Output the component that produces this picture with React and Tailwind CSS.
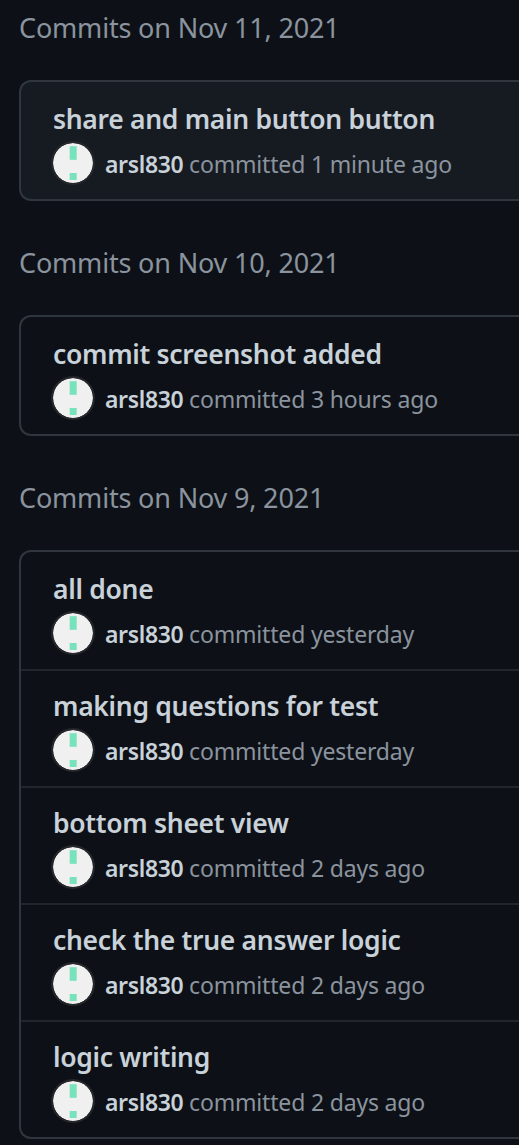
const groups = [
  {
    date: 'Nov 11, 2021',
    highlighted: true,
    commits: [{ title: 'share and main button button', when: '1 minute ago' }],
  },
  {
    date: 'Nov 10, 2021',
    commits: [{ title: 'commit screenshot added', when: '3 hours ago' }],
  },
  {
    date: 'Nov 9, 2021',
    commits: [
      { title: 'all done', when: 'yesterday' },
      { title: 'making questions for test', when: 'yesterday' },
      { title: 'bottom sheet view', when: '2 days ago' },
      { title: 'check the true answer logic', when: '2 days ago' },
      { title: 'logic writing', when: '2 days ago' },
    ],
  },
];

function Avatar() {
  return (
    <svg className="h-10 w-10 shrink-0 rounded-full shadow-[0_0_0_2px_#25272b]" viewBox="0 0 40 40" aria-hidden="true">
      <circle cx="20" cy="20" r="20" fill="#f0f0f0" />
      <rect x="16.7" y="3.2" width="7" height="13.6" fill="#78e2bd" />
      <rect x="16.7" y="30" width="7" height="7" fill="#78e2bd" />
    </svg>
  );
}

function Commit({ title, when, first }) {
  return (
    <li className={first ? 'h-[117px] pt-[19px] pl-8' : 'h-[117px] border-t-2 border-[#21262d] pt-[17px] pl-8'}>
      <p className="h-[42px] text-[26.5px] leading-9 font-semibold tracking-[-0.3px] text-[#c9d1d9]">{title}</p>
      <div className="flex h-10 gap-3">
        <Avatar />
        <p className="pt-[3px] text-[23px] leading-9 tracking-[-0.18px] text-[#8b949e]">
          <span className="font-semibold tracking-[-0.35px] text-[#c9d1d9]">arsl830</span> committed {when}
        </p>
      </div>
    </li>
  );
}

export default function App() {
  return (
    <main className="flex h-[1145px] w-full flex-col gap-11 overflow-hidden bg-[#0d1117] pt-2.5 pl-[19px] font-['Noto_Sans',sans-serif] whitespace-nowrap">
      {groups.map((group) => (
        <section key={group.date}>
          <h2 className="mb-[34px] h-9 text-[27px] leading-9 tracking-[-0.18px] text-[#8b949e]">Commits on {group.date}</h2>
          <ol
            className={
              group.highlighted
                ? 'rounded-l-xl border-2 border-r-0 border-[#30363d] bg-[#161b22]'
                : 'rounded-l-xl border-2 border-r-0 border-[#30363d]'
            }
          >
            {group.commits.map((commit, index) => (
              <Commit key={commit.title} title={commit.title} when={commit.when} first={index === 0} />
            ))}
          </ol>
        </section>
      ))}
    </main>
  );
}
